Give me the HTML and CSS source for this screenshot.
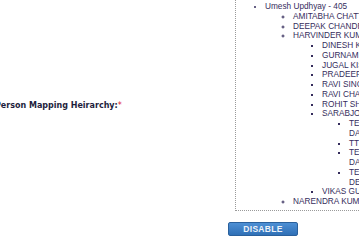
FILE: index.html
```html
<!DOCTYPE html>
<html lang="en">
<head>
  <meta charset="UTF-8" />
  <meta name="viewport" content="width=device-width, initial-scale=1.0"/>
  <title>Person Mapping</title>
  <link rel="stylesheet" href="styles.css">
</head>
<body>
  <div class="field-row">
    <label class="field-label">Person Mapping Heirarchy:<span class="req">*</span></label>

    <!-- hierarchy tree -->
    <div class="tree">
      <ul class="lvl1">
        <li>Umesh Updhyay - 405
          <ul class="lvl2">
            <li>AMITABHA CHATTERJEE</li>
            <li>DEEPAK CHANDRA</li>
            <li>HARVINDER KUMAR
              <ul class="lvl3">
                <li>DINESH KUMAR</li>
                <li>GURNAM SINGH</li>
                <li>JUGAL KISHORE</li>
                <li>PRADEEP KUMAR</li>
                <li>RAVI SINGH</li>
                <li>RAVI CHAUHAN</li>
                <li>ROHIT SHARMA</li>
                <li>SARABJOT SINGH
                  <ul class="lvl4">
                    <li><span>TEJINDER SINGH</span> <span>DALIWAL</span></li>
                    <li><span>TTK</span></li>
                    <li><span>TEJPAL SINGH</span> <span>DAHIYA</span></li>
                    <li><span>TEJVIR SINGH</span> <span>DEOL</span></li>
                  </ul>
                </li>
                <li>VIKAS GUPTA</li>
              </ul>
            </li>
            <li>NARENDRA KUMAR</li>
          </ul>
        </li>
      </ul>
    </div>
  </div>

  <div class="actions">
    <button type="button" class="btn-disable">DISABLE</button>
  </div>
</body>
</html>
```

FILE: styles.css
```css
* {
  box-sizing: border-box;
  margin: 0;
  padding: 0;
}

body {
  font-family: 'Liberation Sans', Arial, sans-serif;
  background-color: #fff;
  width: 359px;
  height: 241px;
  overflow: hidden;
}

.field-row {
  display: flex;
  align-items: center;
  margin-top: -6px;
}

.field-label {
  width: 240px;
  flex-shrink: 0;
  margin-left: -5px;
  padding-top: 6px;
  font-family: 'DejaVu Sans', Verdana, sans-serif;
  font-size: 8px;
  font-weight: bold;
  color: #1e1e3c;
}

.req {
  color: #e0202a;
  font-weight: normal;
}

.tree {
  width: 170px;
  flex-shrink: 0;
  border: 1px dotted #9a9a9a;
  padding: 7px 0 3px;
  font-size: 8.25px;
  line-height: 9.75px;
  color: #352d5c;
}

.tree li {
  white-space: nowrap;
}

.lvl1 {
  padding-left: 29px;
  list-style: disc;
}

.lvl2 {
  padding-left: 28px;
  list-style: circle;
}

.lvl3 {
  padding-left: 29px;
  list-style: square;
}

.lvl4 {
  padding-left: 27px;
  list-style: square;
}

.lvl4 li {
  white-space: normal;
}

.lvl4 li span {
  white-space: nowrap;
}

.actions {
  display: flex;
  padding: 11px 0 0 228px;
}

.btn-disable {
  width: 70px;
  height: 14px;
  background: linear-gradient(#4d8fd4, #2f70b6);
  border: 1px solid #2a609c;
  border-radius: 2px;
  color: #eef3f9;
  font-family: 'Liberation Sans', Arial, sans-serif;
  font-size: 8.5px;
  font-weight: bold;
  letter-spacing: 0.3px;
  line-height: 12px;
  cursor: pointer;
}
```
